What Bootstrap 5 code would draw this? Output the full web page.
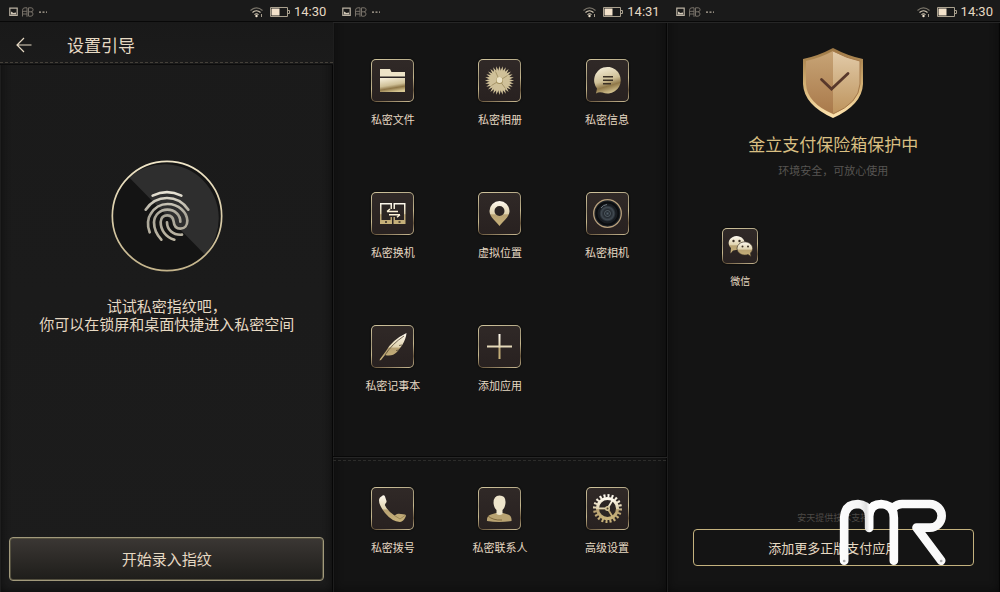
<!DOCTYPE html>
<html lang="zh-CN">
<head>
<meta charset="utf-8">
<meta name="viewport" content="width=device-width, initial-scale=1">
<title>私密空间</title>
<link href="https://cdn.jsdelivr.net/npm/bootstrap@5.3.0/dist/css/bootstrap.min.css" rel="stylesheet">
<style>
  :root { --cream: #e6d9c3; --gold: #d9bf82; }
  body { background: #141414; color: var(--cream); font-family: "Noto Sans CJK SC", sans-serif; }
  .screen {
    background: #141414; box-shadow: inset -1px 0 #060606, inset 1px 0 #1e1e1e, inset 0 0 10px #0a0a0a;
  }
  .screen-guide { background: linear-gradient(#1a1a1a, #1c1c1c); }
  .statusbar {
    height: 22px; padding: 2px 7px 0 9px; background: #1a1a1a;
    border-bottom: 1px solid #080808; box-shadow: 0 1px #262626;
    font: 13px/20px Roboto, sans-serif;
  }
  .titlebar { height: 43px; padding: 3px 0 0 16px; border-bottom: 1px solid #0c0c0c; position: relative; background: linear-gradient(#191919, #1b1b1b); }
  .titlebar h1 { font-size: 17px; line-height: 24px; font-weight: 400; margin-left: 35px; }
  .stitch { height: 1px; background: repeating-linear-gradient(90deg, #444039 0 3px, transparent 3px 5px); }
  .titlebar .stitch { position: absolute; left: 0; right: 0; bottom: 1px; }
  .icon-button { background: none; border: 0; padding: 0; line-height: 0; color: var(--cream); }
  .finger { margin-top: 95px; }
  .hint { font-size: 15px; line-height: 18px; margin-top: 25px; }
  .enroll {
    margin: 0 9px 11px; height: 44px; font-size: 15px; color: var(--cream); border: 1px solid #a29a7c; border-radius: 4px;
    background: linear-gradient(#3b3734, #1e1d1a); box-shadow: inset 0 0 0 1px #54503f;
  }
  .apps { padding: 37px 6px 0; row-gap: 65px; }
  .dock { height: 135px; border-top: 1px solid #262626; box-shadow: 0 -1px #080808; }
  .dock .stitch { background: repeating-linear-gradient(90deg, #2c2c2a 0 3px, transparent 3px 5px); margin-top: 2px; }
  .dock .apps { padding-top: 26px; }
  .app { color: var(--cream); font-size: 11px; line-height: 16px; text-decoration: none; display: flex; flex-direction: column; align-items: center; gap: 9px; }
  .tile {
    width: 43px; height: 43px; border: 1px solid transparent; border-radius: 5px; box-shadow: 0 0 2px #000;
    background: linear-gradient(#302927, #282120) padding-box, linear-gradient(165deg, #d3c79f, #a3987a 35%, #c5b78e 55%, #66543b 78%, #d2c39b) border-box;
  }
  .tile svg { display: block; margin: -1px; }
  .tile-small { width: 36px; height: 36px; }
  .pay-apps { padding: 50px 37px 0; }
  .pay-apps .app { font-size: 10px; width: 73px; }
  .safe-title { font-size: 17px; line-height: 24px; font-weight: 400; color: var(--gold); margin-top: 14px; }
  .safe-note { font-size: 11px; line-height: 16px; color: #575552; margin-top: 6px; }
  .shield { margin-top: 26px; }
  .support { font-size: 9px; line-height: 14px; color: #4d4a46; margin-bottom: 4px; }
  .add-pay { margin: 0 26px 26px; height: 37px; font-size: 13px; color: var(--cream); background: none; border: 1px solid #c4b27e; border-radius: 4px; }
  .mr-logo { right: 51px; bottom: 25px; pointer-events: none; }
</style>
</head>
<body>
<svg class="position-absolute" width="0" height="0" aria-hidden="true">
  <defs>
    <linearGradient id="gold" x1="0" y1="0" x2="0" y2="1">
      <stop offset="0" stop-color="#fffaf0"/><stop offset=".5" stop-color="#e0d3af"/><stop offset=".56" stop-color="#b8a273"/><stop offset="1" stop-color="#c8b27a"/>
    </linearGradient>
    <linearGradient id="sheen" x1=".3" y1="0" x2=".6" y2="1">
      <stop offset="0" stop-color="#f4ecd5"/><stop offset=".5" stop-color="#cfc097"/><stop offset=".72" stop-color="#8f7748"/><stop offset="1" stop-color="#d9c894"/>
    </linearGradient>
    <linearGradient id="print" gradientUnits="userSpaceOnUse" x1="0" y1="120" x2="0" y2="275">
      <stop offset="0" stop-color="#eee9db"/><stop offset=".5" stop-color="#a8a497"/><stop offset="1" stop-color="#bdb6a3"/>
    </linearGradient>
    <linearGradient id="rim" x1="0" y1="0" x2="0" y2="1"><stop offset="0" stop-color="#f0e6c8"/><stop offset="1" stop-color="#c4b48b"/></linearGradient>
    <radialGradient id="lens"><stop offset="0" stop-color="#53606a"/><stop offset=".2" stop-color="#151a20"/><stop offset=".45" stop-color="#414a52"/><stop offset=".6" stop-color="#171b20"/><stop offset="1" stop-color="#22262b"/></radialGradient>
    <linearGradient id="shieldL" x1="0" y1="0" x2="0" y2="1"><stop offset="0" stop-color="#c7a476"/><stop offset="1" stop-color="#a9794a"/></linearGradient>
    <linearGradient id="shieldR" x1="0" y1="0" x2="0" y2="1"><stop offset="0" stop-color="#e2cba9"/><stop offset="1" stop-color="#bd935c"/></linearGradient>
    <linearGradient id="shieldRim" x1="0" y1="0" x2="0" y2="1"><stop offset="0" stop-color="#9b7644"/><stop offset=".55" stop-color="#d6b376"/><stop offset="1" stop-color="#ffe5b0"/></linearGradient>
    <linearGradient id="white" gradientUnits="userSpaceOnUse" x1="510" y1="0" x2="845" y2="0"><stop offset="0" stop-color="#fff"/><stop offset=".21" stop-color="#f3f3f3"/><stop offset=".26" stop-color="#dedede"/><stop offset=".29" stop-color="#fff"/><stop offset="1" stop-color="#f8f8f8"/></linearGradient>
    <g id="spikes"><path id="spike" d="M0-14.6L1.5-9 0 0-1.5-9z"/><use href="#spike" transform="rotate(90)"/><use href="#spike" transform="rotate(180)"/><use href="#spike" transform="rotate(270)"/></g>
    <symbol id="notices" viewBox="0 0 38 12">
      <path d="M.8 2.100h7.400v7.300H.8z" fill="none" stroke="#bcb3a4" stroke-width="1.200"/><path d="M2 8.500V5.500l2.500 1.500 2.500-.5v2z" fill="#d0c6b5"/>
      <path d="M13.5 10.500V4.200Q13.500 1.800 16 1.800h2v9M14 5.300h4M14 8h4M19.500 10V1.800h2.600q2 0 2 2T22 5.800h-2M22 5.800q2 .2 2 2.200t-2 2.200h-2.500" fill="none" stroke="#777168"/>
      <path d="M30 5.500h2v1.200h-2zM33.500 5.500h2v1.200h-2zM37 5.500h1v1.200h-1z" fill="#b5ac9d"/>
    </symbol>
    <symbol id="signals" viewBox="0 0 40 12">
      <g fill="none" stroke="#d8cdb8" stroke-width="1.100"><path d="M.5 4.500Q6.500-.8 12.500 4.500" opacity=".5"/><path d="M2.500 6.500Q6.500 3 10.500 6.500M4.500 8.600Q6.500 7 8.500 8.600"/></g>
      <circle cx="6.500" cy="10" r="1.200" fill="#f3e6d0"/><path d="M11.500 8v3" stroke="#a59c8d"/>
      <path d="M20.500 1.500h17v9h-17zM38 4.500h1.500v3H38" fill="none" stroke="#aaa18f" stroke-width="1"/><path d="M21.500 2.500h8v7h-8z" fill="#f3e2cb"/>
    </symbol>
  </defs>
</svg>

<main class="container-fluid p-0">
<div class="row g-0 min-vh-100">

  <section class="col-4 screen screen-guide d-flex flex-column">
    <div class="statusbar d-flex align-items-center"><svg width="38" height="12"><use href="#notices"/></svg><svg class="ms-auto me-1" width="40" height="12"><use href="#signals"/></svg><span>14:30</span></div>
    <header class="titlebar d-flex align-items-center">
      <button class="icon-button" aria-label="返回"><svg width="16" height="16" fill="none" stroke="currentColor" stroke-width="1.200"><path d="M15.500 8H1M8 1L1 8l7 7"/></svg></button>
      <h1 class="mb-0">设置引导</h1><div class="stitch"></div>
    </header>
    <div class="text-center flex-grow-1">
      <svg class="finger" width="112" height="112" viewBox="32 31 336 336" fill="none" role="img" aria-label="指纹">
        <circle cx="200" cy="199" r="163" fill="#141414"/>
        <path d="M86 83A163 163 0 0 1 314 315z" fill="#2e2e2e"/>
        <circle cx="200" cy="199" r="164" stroke="url(#rim)" stroke-width="5"/>
        <g stroke="url(#print)" stroke-width="8" stroke-linecap="round">
          <path d="M157 138Q200 117 243 138M136 180Q160 145 200 145T264 180"/>
          <path d="M148 248C139 226 143 204 151 193C163 173 180 163 202 163C235 163 260 188 261 213C261 227 253 237 240 237C228 237 221 228 220 216C219 205 213 197 201 197C190 197 182 204 181 217C181 240 195 262 222 270"/>
          <path d="M183 270C168 254 161 236 161 218C162 195 180 180 201 180C224 180 240 196 240 216M200 218C200 240 218 257 245 255"/>
        </g>
      </svg>
      <p class="hint mb-0">试试私密指纹吧，<br>你可以在锁屏和桌面快捷进入私密空间</p>
    </div>
    <button class="enroll">开始录入指纹</button>
  </section>

  <section class="col-4 screen d-flex flex-column">
    <div class="statusbar d-flex align-items-center"><svg width="38" height="12"><use href="#notices"/></svg><svg class="ms-auto me-1" width="40" height="12"><use href="#signals"/></svg><span>14:31</span></div>
    <nav class="flex-grow-1" aria-label="私密应用">
      <div class="row g-0 apps">
        <div class="col-4"><a class="app" href="#"><span class="tile"><svg width="43" height="43"><path d="M9 10h10l1.500 3H34v4.500H9z" fill="#eee4c8"/><path d="M9 19h25v14H9z" fill="url(#sheen)"/></svg></span>私密文件</a></div>
        <div class="col-4"><a class="app" href="#"><span class="tile"><svg width="43" height="43"><g transform="translate(21.500 21.500)" fill="#d0c199"><circle r="8.500" fill="#b09e74"/><use href="#spikes"/><use href="#spikes" transform="rotate(12.857)"/><use href="#spikes" transform="rotate(25.714)"/><use href="#spikes" transform="rotate(38.571)"/><use href="#spikes" transform="rotate(51.429)"/><use href="#spikes" transform="rotate(64.286)"/><use href="#spikes" transform="rotate(77.143)"/><path d="M0 0L-4-9M0 0l8-5M0 0l6 8M0 0l-8 5" stroke="#9b895d" stroke-width=".8"/><circle r="3.500" fill="#a4925f"/><circle cy="-.5" r="2.900" fill="#eee4c7"/></g></svg></span>私密相册</a></div>
        <div class="col-4"><a class="app" href="#"><span class="tile"><svg width="43" height="43"><path d="M10 34.500L11 29.500A13.300 13.300 0 1 1 16.500 33.600Q13 32.500 10 34.500z" fill="url(#sheen)"/><path d="M17 17.800h10M17 21.300h10M17 24.800h8" stroke="#3b3025" stroke-width="1.500"/></svg></span>私密信息</a></div>
        <div class="col-4"><a class="app" href="#"><span class="tile"><svg width="43" height="43"><path fill-rule="evenodd" d="M9 11h12v6h-1.500v-4.500h-9V28h9v-3H21v7H9zM22.500 11h12v21h-12v-7H24v3h9V12.500h-9V17h-1.500z" fill="url(#gold)"/><path d="M16 19.500h11M19 17l-3 2.500M18 22.700h11M29 22.700l-3 2.500" stroke="#fff4d8" stroke-width="1.400" fill="none"/><path d="M14 30h2M27.500 30h2" stroke="#332922" stroke-width="1.500"/></svg></span>私密换机</a></div>
        <div class="col-4"><a class="app" href="#"><span class="tile"><svg width="43" height="43"><path fill-rule="evenodd" d="M21.500 34C18 29.500 11.500 25 11.500 19a10 10 0 0 1 20 0C31.500 25 25 29.500 21.500 34zM21.500 14a5 5 0 1 0 0 10 5 5 0 0 0 0-10z" fill="url(#gold)"/></svg></span>虚拟位置</a></div>
        <div class="col-4"><a class="app" href="#"><span class="tile"><svg width="43" height="43"><circle cx="21.500" cy="21.500" r="13.800" fill="url(#lens)" stroke="#b9a17d" stroke-width="1.300"/><circle cx="21.500" cy="21.500" r="11" fill="none" stroke="#0b0d10" stroke-width="2"/><circle cx="21.500" cy="21.500" r="3" fill="none" stroke="#66727a" stroke-width=".8"/><path d="M15 16q2-3 6-3.500" stroke="#707a83" fill="none"/></svg></span>私密相机</a></div>
        <div class="col-4"><a class="app" href="#"><span class="tile"><svg width="43" height="43"><path d="M35.500 8Q21 15 15 26L9 34l-.5 1.500 1.500-.5 4-5Q21 32 26 27L31 20.500Q35 14 35.500 8z" fill="url(#gold)"/><path d="M33 11Q21 19 14 30M31 20l-3 .5M28 25l-3 .5" stroke="#554936" stroke-width=".8" fill="none"/></svg></span>私密记事本</a></div>
        <div class="col-4"><a class="app" href="#"><span class="tile"><svg width="43" height="43" fill="url(#gold)"><rect x="20.500" y="9" width="2" height="25"/><rect x="9" y="20.500" width="25" height="2" fill="#e5d9b9"/></svg></span>添加应用</a></div>
      </div>
    </nav>
    <nav class="dock" aria-label="常用">
      <div class="stitch"></div>
      <div class="row g-0 apps">
        <div class="col-4"><a class="app" href="#"><span class="tile"><svg width="43" height="43"><path d="M9 10.500L12 8.200Q13.500 8 14 9.500L15.500 14Q15.800 15.500 14.500 16.500L13.800 18Q17 24.500 23.500 28.500L26 27Q27 26.500 28 26.800L34 27.500Q35.500 28 34.500 30Q32.500 34.500 29 35Q21 34.500 14 26Q7 17 8.200 12z" fill="url(#gold)"/><path d="M23.500 28.500L29 32l5-3.500" stroke="#8a7548" stroke-width=".7" fill="none"/></svg></span>私密拨号</a></div>
        <div class="col-4"><a class="app" href="#"><span class="tile"><svg width="43" height="43"><path d="M9 34Q8.500 29 13 27.500L18 26H25L30 27.500Q34 29 33.500 34Q21 36 9 34z" fill="#b9a372"/><path d="M10 29Q15 33.500 24 33" stroke="#80693e" fill="none"/><path d="M21.500 8.500Q28 8.500 27.500 16Q27 21 24.500 23V27Q21.500 29 18.500 27V23Q16 21 15.500 16Q15.500 8.500 21.500 8.500z" fill="#eee5cb"/></svg></span>私密联系人</a></div>
        <div class="col-4"><a class="app" href="#"><span class="tile"><svg width="43" height="43" fill="none"><g stroke="url(#gold)"><circle cx="21.500" cy="21.500" r="10" stroke-width="3"/><circle cx="21.500" cy="21.500" r="12.800" stroke-width="3.400" pathLength="40" stroke-dasharray="1 1"/><path d="M21.500 21.500H11M21.500 21.500L27 12.500M21.500 21.500L27 30.500" stroke-width="1.800"/></g><circle cx="21.500" cy="21.500" r="2.500" fill="#d6c698"/><circle cx="21.500" cy="21.500" r="1" fill="#4d4030"/></svg></span>高级设置</a></div>
      </div>
    </nav>
  </section>

  <section class="col-4 screen d-flex flex-column position-relative">
    <div class="statusbar d-flex align-items-center"><svg width="38" height="12"><use href="#notices"/></svg><svg class="ms-auto me-1" width="40" height="12"><use href="#signals"/></svg><span>14:30</span></div>
    <div class="text-center">
      <svg class="shield" width="60" height="70" role="img" aria-label="受保护">
        <path d="M30 0Q45 8 60 11V36Q59 57 30 70Q1 57 0 36V11Q15 8 30 0z" fill="url(#shieldRim)"/>
        <path d="M30 3Q16 10.500 3 13V36Q4 55 30 66z" fill="url(#shieldL)"/><path d="M30 3Q44 10.500 57 13V36Q56 55 30 66z" fill="url(#shieldR)"/>
        <path d="M30 3Q44 10.500 57 13V36Q56 55 30 66" fill="none" stroke="#a5794a" stroke-width="1"/>
        <path d="M18.500 31.500L28.500 41L45 25.500" fill="none" stroke="#58382b" stroke-width="2.800" stroke-linecap="round"/>
      </svg>
      <h2 class="safe-title mb-0">金立支付保险箱保护中</h2>
      <p class="safe-note mb-0">环境安全，可放心使用</p>
    </div>
    <nav class="pay-apps flex-grow-1" aria-label="支付应用">
      <a class="app" href="#"><span class="tile tile-small"><svg width="36" height="36"><path d="M8.500 25.500L9 20A8 7 0 1 1 14 22L11 22.500z" fill="url(#gold)"/><path d="M26 26.500L29 28.500 28.500 25A7.800 6.600 0 1 0 26 26.500z" fill="url(#gold)" stroke="#40372a" stroke-width=".7"/><g fill="#3b3025"><circle cx="11.500" cy="13" r="1.200"/><circle cx="17.500" cy="13" r="1.200"/><circle cx="20.500" cy="18.500" r="1"/><circle cx="26" cy="18.500" r="1"/></g></svg></span>微信</a>
    </nav>
    <p class="support text-center">安天提供技术支持</p>
    <button class="add-pay">添加更多正版支付应用</button>
    <svg class="mr-logo position-absolute" width="112" height="70" viewBox="510 50 335 210" fill="none" stroke="url(#white)" stroke-width="26" stroke-linecap="round" stroke-linejoin="round" role="img" aria-label="MR">
      <path d="M531 241V112Q534 71 572 71Q605 73 606 108V143M606 108Q608 71 642 71Q680 73 680 112V241"/>
      <path d="M676 84Q690 71 705 71H788A35 35 0 0 1 788 142H748L822 241"/>
      <circle cx="531" cy="242" r="4" fill="#aaa" stroke="none"/><circle cx="822" cy="242" r="4" fill="#aaa" stroke="none"/>
    </svg>
  </section>

</div>
</main>
<script src="https://cdn.jsdelivr.net/npm/bootstrap@5.3.0/dist/js/bootstrap.bundle.min.js"></script>
</body>
</html>
